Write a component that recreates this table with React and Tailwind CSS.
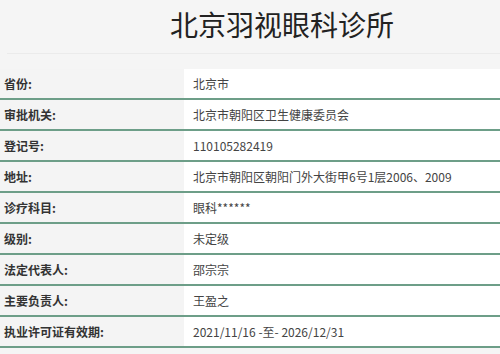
import React from "react";

const rows = [
  ["省份:", "北京市"],
  ["审批机关:", "北京市朝阳区卫生健康委员会"],
  ["登记号:", "110105282419"],
  ["地址:", "北京市朝阳区朝阳门外大街甲6号1层2006、2009"],
  ["诊疗科目:", "眼科******"],
  ["级别:", "未定级"],
  ["法定代表人:", "邵宗宗"],
  ["主要负责人:", "王盈之"],
  ["执业许可证有效期:", "2021/11/16 -至- 2026/12/31"],
];

const App = () => {
  return (
    <div
      className="w-[500px] h-[354px] overflow-hidden bg-[#f5f5f5]"
      style={{ fontFamily: '"Microsoft YaHei", "Noto Sans CJK SC", "Noto Sans", sans-serif' }}
    >
      {/* Title */}
      <div className="h-[53px] pl-[170px] pt-[4px]">
        <h1 className="text-[28px] leading-[40px] text-[#222] tracking-[0px]">北京羽视眼科诊所</h1>
      </div>
      <div className="ml-[7px] h-px bg-[#ebebeb]" />

      {/* Info table */}
      <div className="mt-[15px]">
        {rows.map(([label, value]) => (
          <div key={label} className="flex h-[31px] border-b-2 border-[#6d9e88]">
            <div className="w-[184px] shrink-0 bg-[#f4f4f4] pl-[4px] flex items-center text-[12px] font-bold text-[#333]">
              {label}
            </div>
            <div className="flex-1 bg-white pl-[9px] flex items-center text-[12px] text-[#444]">
              {value}
            </div>
          </div>
        ))}
      </div>
    </div>
  );
};

export default App;
